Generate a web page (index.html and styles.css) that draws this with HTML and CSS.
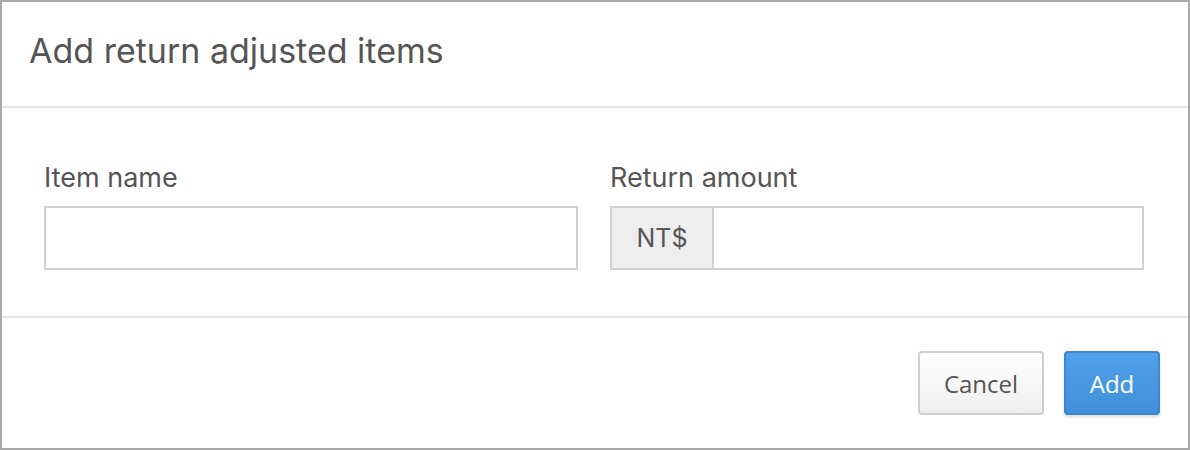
FILE: index.html
```html
<!DOCTYPE html>
<html>
<head>
<meta charset="utf-8">
<link rel="stylesheet" href="styles.css">
</head>
<body>
<div class="modal">
  <div class="modal-header">
    <h1 class="title">Add return adjusted items</h1>
  </div>
  <div class="modal-body">
    <div class="field">
      <label class="label">Item name</label>
      <div class="input-wrap"><input class="input" type="text"></div>
    </div>
    <div class="field">
      <label class="label">Return amount</label>
      <div class="input-wrap">
        <span class="addon">NT$</span>
        <input class="input" type="text">
      </div>
    </div>
  </div>
  <div class="modal-footer">
    <button class="btn btn-default">Cancel</button>
    <button class="btn btn-primary">Add</button>
  </div>
</div>
</body>
</html>
```
FILE: styles.css
```css
html, body {
  margin: 0;
  padding: 0;
  background: #fff;
}
.modal {
  box-sizing: border-box;
  width: 1190px;
  height: 450px;
  border: 2px solid #a9a9a9;
  display: flex;
  flex-direction: column;
  font-family: Inter, "Open Sans", sans-serif;
  color: #555;
}
.modal-header {
  height: 106px;
  box-sizing: border-box;
  border-bottom: 2px solid #e6e6e6;
  display: flex;
  align-items: center;
  padding: 0 0 8px 27px;
}
.title {
  margin: 0;
  font-weight: 400;
  font-size: 34px;
  color: #555;
  letter-spacing: 0;
}
.modal-body {
  height: 210px;
  border-bottom: 2px solid #e6e6e6;
  display: grid;
  grid-template-columns: 534px 534px;
  column-gap: 32px;
  padding: 0 0 0 42px;
  align-content: start;
  padding-top: 54px;
  box-sizing: border-box;
}
.field {
  display: flex;
  flex-direction: column;
}
.label {
  font-size: 27px;
  line-height: 32px;
  margin-bottom: 12px;
  color: #555;
}
.input-wrap {
  display: flex;
  box-sizing: border-box;
  height: 64px;
  border: 2px solid #d0d0d0;
}
.addon {
  width: 100px;
  background: #eeeeee;
  border-right: 2px solid #d0d0d0;
  display: flex;
  align-items: center;
  justify-content: center;
  font-size: 25px;
  color: #555;
}
.input {
  flex: 1;
  border: 0;
  outline: none;
  min-width: 0;
  padding: 0 12px;
  font-size: 22px;
}
.modal-footer {
  flex: 1;
  display: flex;
  justify-content: flex-end;
  align-items: flex-start;
  padding: 33px 28px 0 0;
  gap: 20px;
}
.btn {
  height: 64px;
  border-radius: 4px;
  font-family: "Open Sans", sans-serif;
  font-size: 24px;
  padding: 0;
  box-sizing: border-box;
}
.btn-default {
  width: 126px;
  border: 2px solid #cfcfcf;
  background: linear-gradient(#ffffff, #efefef);
  color: #555;
}
.btn-primary {
  width: 96px;
  border: 2px solid #3f86cc;
  background: linear-gradient(#4ea1ea, #428fd9);
  color: #fff;
  box-shadow: 0 2px 3px rgba(0,0,0,0.15);
}
```
